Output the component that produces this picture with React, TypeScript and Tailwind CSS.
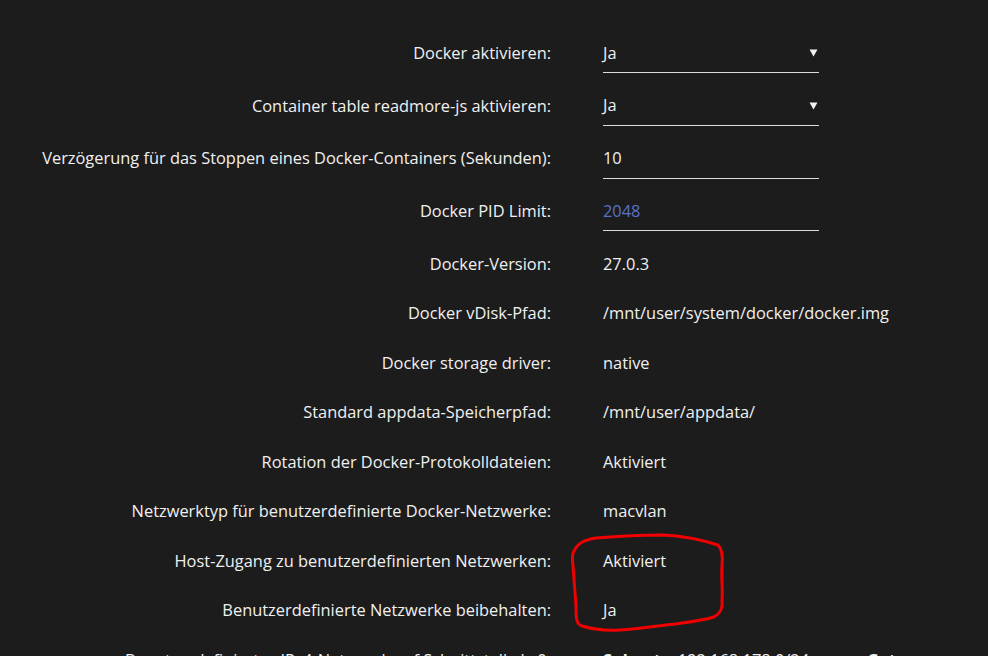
import React from 'react';

type Row = {
  label: string;
  value: React.ReactNode;
  kind?: 'select' | 'input' | 'text';
};

const rows: Row[] = [
  { label: 'Docker aktivieren:', value: 'Ja', kind: 'select' },
  { label: 'Container table readmore-js aktivieren:', value: 'Ja', kind: 'select' },
  { label: 'Verzögerung für das Stoppen eines Docker-Containers (Sekunden):', value: '10', kind: 'input' },
  { label: 'Docker PID Limit:', value: <span className="text-[#5a71c9]">2048</span>, kind: 'input' },
  { label: 'Docker-Version:', value: '27.0.3' },
  { label: 'Docker vDisk-Pfad:', value: '/mnt/user/system/docker/docker.img' },
  { label: 'Docker storage driver:', value: 'native' },
  { label: 'Standard appdata-Speicherpfad:', value: '/mnt/user/appdata/' },
  { label: 'Rotation der Docker-Protokolldateien:', value: 'Aktiviert' },
  { label: 'Netzwerktyp für benutzerdefinierte Docker-Netzwerke:', value: 'macvlan' },
  { label: 'Host-Zugang zu benutzerdefinierten Netzwerken:', value: 'Aktiviert' },
  { label: 'Benutzerdefinierte Netzwerke beibehalten:', value: 'Ja' },
  {
    label: 'Benutzerdefiniertes IPv4-Netzwerk auf Schnittstelle br0:',
    value: (
      <span className="whitespace-nowrap">
        <b>Subnetz:</b> 192.168.178.0/24<span className="inline-block w-[58px]" />
        <b>Gateway:</b>
        <span className="inline-block w-[60px]" />
        192.168.178.1
      </span>
    ),
  },
];

function Caret() {
  return (
    <svg width="9" height="9" viewBox="0 0 9 9" className="shrink-0">
      <path d="M0.5 1.5 H8.5 L4.5 8.5 Z" fill="#f2f2f2" />
    </svg>
  );
}

function Field({ row }: { row: Row }) {
  if (row.kind === 'select' || row.kind === 'input') {
    return (
      <div className="flex h-[40px] w-[216px] items-center justify-between border-b border-[#dcdcdc] pr-[1px]">
        <span>{row.value}</span>
        {row.kind === 'select' && <Caret />}
      </div>
    );
  }
  return <div className="whitespace-nowrap">{row.value}</div>;
}

export default function App() {
  return (
    <div
      className="relative h-[656px] w-[988px] overflow-hidden bg-[#1c1c1c] pt-[27px] text-[16.4px] text-[#f0f0f0]"
      style={{ fontFamily: '"Open Sans", "Noto Sans", sans-serif' }}
    >
      {rows.map((row, i) => {
        const boxed = row.kind === 'select' || row.kind === 'input';
        return (
          <div
            key={i}
            className={
              boxed
                ? 'flex h-[52.7px] items-center'
                : i === 4
                ? 'mt-[1.5px] flex h-[49.5px] items-center'
                : 'flex h-[49.5px] items-center'
            }
          >
            <div className="w-[551px] shrink-0 whitespace-nowrap text-right">{row.label}</div>
            <div className="ml-[52px]">
              <Field row={row} />
            </div>
          </div>
        );
      })}

      {/* red freehand annotation */}
      <svg className="pointer-events-none absolute left-0 top-0" width="988" height="656">
        <path
          d="M574 551 C578 543 584 540 596 538 C620 536 640 535 663 535 C685 536 702 540 718 545 C722 549 723 556 722 566 C721 578 723 590 722 600 C723 608 721 613 714 617 C700 621 690 622 675 624 C655 626 640 629 620 630 C603 631 592 629 582 626 C576 624 576 618 576 606 C575 592 574 580 573 566 C572 558 572 554 574 551 Z"
          fill="none"
          stroke="#f00000"
          strokeWidth="3"
          strokeLinejoin="round"
        />
      </svg>
    </div>
  );
}
